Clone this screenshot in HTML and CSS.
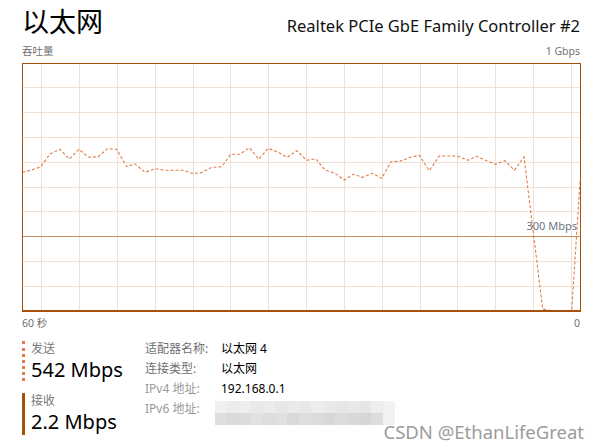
FILE: index.html
```html
<!DOCTYPE html>
<html lang="zh-CN">
<head>
  <meta charset="UTF-8" />
  <meta name="viewport" content="width=device-width, initial-scale=1.0"/>
  <title>以太网</title>
  <link rel="stylesheet" href="styles.css">
</head>
<body>

  <!-- Titolo -->
  <header class="header">
    <h1 class="title">以太网</h1>
    <div class="adapter">Realtek PCIe GbE Family Controller #2</div>
  </header>

  <div class="axis">
    <span>吞吐量</span>
    <span>1 Gbps</span>
  </div>

  <!-- Grafico -->
  <svg class="chart" width="559" height="249" viewBox="0 0 559 249">
    <g stroke="#f0e1d4" stroke-width="1">
      <line x1="19.5" y1="0" x2="19.5" y2="249"/>
      <line x1="57.5" y1="0" x2="57.5" y2="249"/>
      <line x1="95.5" y1="0" x2="95.5" y2="249"/>
      <line x1="133.5" y1="0" x2="133.5" y2="249"/>
      <line x1="171.5" y1="0" x2="171.5" y2="249"/>
      <line x1="208.5" y1="0" x2="208.5" y2="249"/>
      <line x1="246.5" y1="0" x2="246.5" y2="249"/>
      <line x1="284.5" y1="0" x2="284.5" y2="249"/>
      <line x1="322.5" y1="0" x2="322.5" y2="249"/>
      <line x1="360.5" y1="0" x2="360.5" y2="249"/>
      <line x1="398.5" y1="0" x2="398.5" y2="249"/>
      <line x1="435.5" y1="0" x2="435.5" y2="249"/>
      <line x1="473.5" y1="0" x2="473.5" y2="249"/>
      <line x1="511.5" y1="0" x2="511.5" y2="249"/>
      <line x1="549.5" y1="0" x2="549.5" y2="249"/>
      <line x1="0" y1="24.5" x2="559" y2="24.5"/>
      <line x1="0" y1="49.5" x2="559" y2="49.5"/>
      <line x1="0" y1="74.5" x2="559" y2="74.5"/>
      <line x1="0" y1="99.5" x2="559" y2="99.5"/>
      <line x1="0" y1="124.5" x2="559" y2="124.5"/>
      <line x1="0" y1="148.5" x2="559" y2="148.5"/>
      <line x1="0" y1="198.5" x2="559" y2="198.5"/>
      <line x1="0" y1="223.5" x2="559" y2="223.5"/>
    </g>
    <line x1="0" y1="173.5" x2="559" y2="173.5" stroke="#c98f62" stroke-width="1.2"/>
    <text class="scale-label" x="555" y="167" text-anchor="end">300 Mbps</text>
    <polyline fill="none" stroke="#e07c48" stroke-width="1.1" stroke-dasharray="3 2"
      points="0.3,109.3 9.7,107 18.7,103.7 28,91 38,86.3 47.3,96 57,86.3 66.3,94.3 76.3,93.7 85.3,85.7 94.7,86.3 104.7,103.7 113,101 123,109.3 133,105.7 143,107.3 161.3,107.3 169.7,110.3 178,110.3 189.7,104.3 199.7,103.7 208.7,91.3 218,91.3 227.3,84.7 236.7,96.3 246.3,85.3 256.3,89.3 265.3,94.3 274.7,87.7 284.7,97.3 293.7,95.7 303,107 313,110.3 322.3,117 331.3,111.3 340.7,114.3 350.3,110.3 359.7,115.3 369,98.7 378,98.3 388,94.3 397.3,92.3 407.3,107.7 417.3,93 435.3,93 445.7,97.3 454.7,93.3 464.7,97.7 473.7,101.3 483,97.7 492.3,107.3 502,94 520.7,246 529.7,247.7 549.7,247.7 558,118.7"/>
    <polyline fill="none" stroke="#a6520c" stroke-width="1" points="0,247.5 559,247.5"/>
    <rect x="0.5" y="0.5" width="558" height="248" fill="none" stroke="#a6520c" stroke-width="1"/>
  </svg>

  <div class="axis time">
    <span>60 秒</span>
    <span>0</span>
  </div>

  <!-- Statistiche -->
  <section class="stats">
    <div class="rates">
      <div class="rate send">
        <div class="rate-label">发送</div>
        <div class="rate-value">542 Mbps</div>
      </div>
      <div class="rate recv">
        <div class="rate-label">接收</div>
        <div class="rate-value">2.2 Mbps</div>
      </div>
    </div>

    <div class="details">
      <div class="key">适配器名称:</div><div class="val">以太网 4</div>
      <div class="key">连接类型:</div><div class="val">以太网</div>
      <div class="key light">IPv4 地址:</div><div class="val">192.168.0.1</div>
      <div class="key light">IPv6 地址:</div>
      <div class="val">
        <div class="mosaic">
          <span style="background:#f0f0f0"></span><span style="background:#ececec"></span><span style="background:#eeeeee"></span><span style="background:#e9e9e9"></span><span style="background:#ececec"></span><span style="background:#e7e7e7"></span><span style="background:#eaeaea"></span><span style="background:#e8e8e8"></span><span style="background:#ededed"></span><span style="background:#e9e9e9"></span><span style="background:#e6e6e6"></span><span style="background:#e9e9e9"></span><span style="background:#e5e5e5"></span><span style="background:#eeeeee"></span><span style="background:#f2f2f2"></span>
          <span style="background:#dedede"></span><span style="background:#dadada"></span><span style="background:#dcdcdc"></span><span style="background:#e1e1e1"></span><span style="background:#dddddd"></span><span style="background:#e0e0e0"></span><span style="background:#d9d9d9"></span><span style="background:#dedede"></span><span style="background:#dbdbdb"></span><span style="background:#d8d8d8"></span><span style="background:#dcdcdc"></span><span style="background:#d9d9d9"></span><span style="background:#d6d6d6"></span><span style="background:#dddddd"></span><span style="background:#f1f1f1"></span>
        </div>
      </div>
    </div>
  </section>

  <div class="watermark">CSDN @EthanLifeGreat</div>

</body>
</html>
```

FILE: styles.css
```css
body {
  font-family: "Noto Sans", "Noto Sans CJK SC", sans-serif;
  margin: 0;
  padding: 0 20px 0 22px;
  background-color: #fff;
  color: #000;
  position: relative;
  height: 448px;
  overflow: hidden;
}

.header {
  display: flex;
  justify-content: space-between;
  align-items: baseline;
  height: 42px;
}

.title {
  font-family: "Noto Sans CJK SC", sans-serif;
  font-weight: normal;
  font-size: 27px;
  margin: 0;
  line-height: 42px;
}

.adapter {
  font-size: 16.5px;
  color: #111;
}

.axis {
  display: flex;
  justify-content: space-between;
  font-size: 10.5px;
  color: #707070;
  height: 21px;
  line-height: 18px;
}

.axis.time {
  height: 27px;
  padding-top: 2px;
}

.chart {
  display: block;
  width: 559px;
  height: 249px;
}

.scale-label {
  font-family: "Noto Sans", sans-serif;
  font-size: 11px;
  fill: #6b7484;
}

.stats {
  display: flex;
}

.rates {
  width: 123px;
}

.rate {
  padding-left: 6px;
}

.send {
  border-left: 3px dotted #e07c48;
  height: 40px;
  margin-bottom: 12px;
}

.recv {
  border-left: 3px solid #a6520c;
  height: 42px;
}

.rate-label {
  font-size: 12px;
  color: #777;
  line-height: 16px;
}

.rate-value {
  font-size: 20px;
  line-height: 26px;
}

.details {
  display: grid;
  grid-template-columns: 76px auto;
  grid-auto-rows: 20px;
  font-size: 12px;
  line-height: 16px;
}

.key {
  color: #707070;
}

.key.light {
  color: #999;
}

.mosaic {
  display: grid;
  grid-template-columns: repeat(15, 12px);
  grid-template-rows: 12px 12px;
  margin-left: -6px;
  margin-top: 0;
}

.watermark {
  position: absolute;
  right: 16px;
  bottom: 4px;
  font-size: 18.5px;
  color: #9c9c9c;
  text-shadow: 0 0 2px #fff, 0 0 2px #fff;
}
```
